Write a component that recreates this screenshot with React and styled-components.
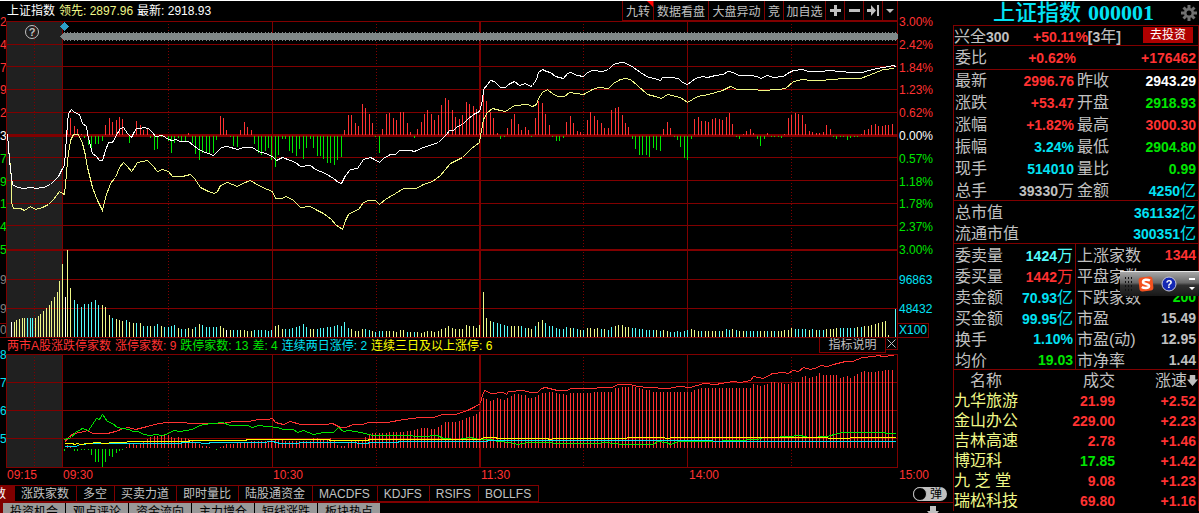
import React from "react";
import styled, { createGlobalStyle } from "styled-components";

const c = {
  line: "#800000",
  red: "#ff3232",
  green: "#00e600",
  cyan: "#02e2f4",
  aqua: "#54fcfc",
  gray: "#c0c0c0",
  dim: "#808080",
  yellow: "#ffff00",
  pale: "#f0f888",
  white: "#ffffff",
};

const Global = createGlobalStyle`
  *, *::before, *::after { box-sizing: border-box; }
  html, body { margin: 0; background: #000; overflow: hidden; }
  body, button, input, table {
    font-family: "Liberation Sans", "Noto Sans CJK SC", sans-serif;
    font-size: 12px;
  }
  button { margin: 0; padding: 0; border: 0; background: none; color: inherit; cursor: pointer; }
`;

/* ---------- page frame ---------- */

const Page = styled.div`
  display: grid;
  grid-template-columns: minmax(0, 1fr) 246px;
  border-top: 1px solid #fff;
  background: #000;
  color: ${c.gray};
  white-space: nowrap;
`;

const Main = styled.main`
  display: flex;
  flex-direction: column;
  min-width: 0;
`;

const Charts = styled.div`
  display: grid;
  grid-template-columns: 6px minmax(0, 1fr) 55px;
`;

const Center = styled.div`
  display: flex;
  flex-direction: column;
  min-width: 0;
`;

const Plot = styled.svg`
  display: block;
  width: 100%;
  height: ${(p) => p.$h}px;
`;

/* ---------- axis columns ---------- */

const Axis = styled.div`
  display: flex;
  flex-direction: column;
  align-items: flex-start;
  padding-top: 13px;
  overflow: hidden;
`;

const Scale = styled.div`
  display: flex;
  flex-direction: column;
  justify-content: space-between;
  height: ${(p) => p.$h}px;
  margin-bottom: ${(p) => p.$after}px;
  padding-left: ${(p) => p.$pad || 0}px;
`;

const Tick = styled.span`
  color: ${(p) => p.$color};
  line-height: 16px;
`;

const Unit = styled.span`
  border: 1px solid ${c.line};
  border-left: 0;
  padding: 0 1px;
  line-height: 13px;
  margin-bottom: 9px;
  color: ${(p) => p.$color};
`;

const ClippedUnit = styled(Unit)`
  padding: 0;
`;

/* ---------- headers ---------- */

const Header = styled.header`
  display: flex;
  justify-content: space-between;
  height: 20px;
`;

const Legend = styled.div`
  display: flex;
  gap: 4px;
  padding-left: 1px;
  line-height: ${(p) => p.$lh}px;
`;

const Ink = styled.span`
  color: ${(p) => p.$color};
`;

const Toolbar = styled.div`
  display: flex;
  border-left: 1px solid ${c.line};
`;

const Tool = styled.button`
  display: flex;
  align-items: center;
  justify-content: center;
  position: relative;
  width: ${(p) => p.$w}px;
  border-right: 1px solid ${c.line};
  border-bottom: 1px solid ${c.line};
`;

const Corner = styled.i`
  position: absolute;
  top: 0;
  right: 0;
  border-top: 6px solid #f00;
  border-left: 6px solid transparent;
`;

const IndicatorBar = styled.div`
  display: flex;
  justify-content: space-between;
  height: 16px;
`;

const Note = styled.button`
  height: 15px;
  line-height: 15px;
  width: 67px;
  border: solid ${c.line};
  border-width: 0 1px 1px;
`;

const Close = styled.button`
  display: flex;
  align-items: center;
  justify-content: center;
  width: 12px;
  height: 12px;
  border: solid ${c.line};
  border-width: 0 1px 1px 0;
`;

const NoteGroup = styled.div`
  display: flex;
`;

/* ---------- time axis and tab strips ---------- */

const Times = styled.div`
  display: grid;
  grid-template-columns: 6px 56fr 210fr 208fr 208fr 210fr 55px;
  line-height: 15px;
  height: 17px;
  color: ${c.red};
`;

const Time = styled.span`
  padding-left: 1px;
`;

const Strip = styled.nav`
  display: flex;
  height: 18px;
  border-bottom: 1px solid ${c.line};
`;

const Tab = styled.button`
  height: 17px;
  line-height: 17px;
  padding: 0 7px 0 6px;
  border: solid ${c.line};
  border-width: 1px 1px 1px 0;
`;

const ActiveTab = styled(Tab)`
  display: flex;
  justify-content: flex-end;
  width: 15px;
  padding: 0 8px 0 0;
  overflow: hidden;
  background: ${c.line};
  color: #fff;
`;

const Switch = styled.label`
  display: flex;
  align-items: center;
  gap: 3px;
  height: 14px;
  margin: 2px 6px 0 auto;
  padding-right: 5px;
  border-radius: 7px;
  background: ${c.gray};
  color: #000;
  line-height: 14px;
`;

const SwitchInput = styled.input`
  appearance: none;
  width: 14px;
  height: 14px;
  margin: 0;
  border: 1px solid ${c.gray};
  border-radius: 50%;
  background: #000;
`;

const NewsStrip = styled.nav`
  display: flex;
  gap: 1px;
  border-left: 3px solid ${c.line};
`;

const NewsTab = styled.button`
  width: 62px;
  height: 18px;
  line-height: 18px;
  background: #999;
  color: #000;
`;

const NewsArrow = styled.button`
  margin: 3px 14px 0 auto;
`;

/* ---------- quote panel ---------- */

const Panel = styled.aside`
  font-size: 16px;
`;

const PanelTitle = styled.h1`
  display: flex;
  align-items: center;
  margin: 0;
  height: 24px;
  padding: 0 2px 0 40px;
  gap: 7px;
  color: ${c.cyan};
  font: bold 22px/24px "Liberation Serif", "Noto Sans CJK SC", serif;
`;

const TitleName = styled.span`
  font-weight: 500;
`;

const Settings = styled.button`
  margin-left: auto;
  line-height: 0;
`;

const PanelBody = styled.div`
  border: solid ${c.line};
  border-width: 0 1px;
`;

const Section = styled.section`
  box-shadow: inset 0 1px ${c.line};
  padding-top: ${(p) => p.$pad || 0}px;
  margin-top: ${(p) => (p.$tuck ? -1 : 0)}px;
`;

const Pairs = styled(Section)`
  display: grid;
  grid-template-columns: ${(p) => (p.$single ? "1fr" : "1fr 1fr")};
`;

const Pair = styled.div`
  display: flex;
  justify-content: space-between;
  height: ${(p) => p.$h}px;
  line-height: ${(p) => p.$h + 2}px;
  padding: 0 2px 0 1px;
  border-right: ${(p) => (p.$rule ? `1px solid ${c.line}` : "0")};
`;

const Num = styled.span`
  font-size: 14px;
  font-weight: bold;
  color: ${(p) => p.$color};
`;

const Suffix = styled.span`
  font-size: 16px;
  font-weight: normal;
`;

const Fund = styled(Section)`
  display: flex;
  align-items: center;
  height: 20px;
`;

const FundRate = styled.span`
  margin-left: auto;
  margin-right: 22px;
`;

const Invest = styled.button`
  width: 50px;
  height: 16px;
  margin-right: 5px;
  background: #b00000;
  color: #fff;
  line-height: 16px;
`;

const Ratio = styled(Section)`
  display: grid;
  grid-template-columns: 60px 61px 1fr;
  padding: 1px 2px 0 1px;
  height: 24px;
  line-height: 24px;
  text-align: right;
  & > :first-child { text-align: left; }
`;

const Rank = styled.table`
  width: 100%;
  table-layout: fixed;
  border-collapse: collapse;
  font-size: 16px;
  th, td { padding: 0; height: 20px; line-height: 20px; font-weight: normal; text-align: right; }
  th { height: 21px; }
  th:first-child { text-align: left; padding-left: 16px; }
  td:first-child { text-align: left; color: ${c.pale}; }
  td:last-child { padding-right: 2px; }
  th:nth-child(1) { width: 90px; }
  th:nth-child(2) { width: 71px; }
`;

/* ---------- floating input-method bar ---------- */

const ImeBar = styled.div`
  position: fixed;
  top: 271px;
  right: 0;
  display: flex;
  align-items: center;
  width: 79px;
  height: 25px;
  padding: 0 4px;
  border-top: 1px solid #e8e8e8;
  border-radius: 0 0 0 4px;
  background: linear-gradient(#a8a8a8, #686868 45%, #303030 55%, #181818);
`;

const Grip = styled.span`
  width: 9px;
  height: 16px;
  margin-right: 6px;
  background: radial-gradient(circle, #111 1px, transparent 1px) 0 0 / 3px 4px;
`;

const ImeIcon = styled.button`
  line-height: 0;
  margin-right: ${(p) => p.$after}px;
`;

/* ---------- series data ---------- */

const OPEN_X = 67;
const STEP = 3.466;
const barX = (i) => Math.round(OPEN_X + i * STEP);

const indexLine =
  "7,134 9,160 12,184 15,186 22,188 32,187 35,188 43,187 50,184 53,181 58,176 62,168 64,165 67,123 68,113 71,109 74,112 79,114 82,123 86,126 88,138 92,153 96,156 99,160 102,160 105,150 108,142 112,142 117,133 120,128 123,127 127,133 131,137 133,133 136,128 140,128 143,127 148,128 152,132 155,136 162,135 168,139 172,140 175,139 180,141 188,141 193,145 197,148 202,151 208,153 213,155 218,150 221,147 227,146 237,149 243,147 252,147 258,151 265,153 272,156 276,160 282,157 290,160 295,162 300,166 310,165 315,169 325,173 333,178 338,182 341,183 345,175 350,169 357,168 363,159 370,157 374,159 379,162 383,158 390,154 395,154 399,150 410,150 414,151 423,147 438,142 443,137 446,134 449,130 453,130 457,126 462,124 467,119 473,114 479,111 482,100 483,89 487,84 490,80 494,81 500,87 505,87 508,84 514,81 519,85 525,83 530,86 532,85 536,79 538,72 542,69 546,71 550,72 555,76 563,78 567,73 570,72 577,75 583,76 587,72 592,70 602,71 608,69 612,65 615,63 623,62 628,64 633,67 640,72 648,77 654,78 660,80 662,77 670,77 678,78 682,82 687,84 695,78 702,76 707,77 715,75 723,74 727,71 733,72 738,75 750,75 757,76 760,78 767,75 773,77 783,76 787,73 793,70 802,69 808,71 820,71 830,70 838,71 853,72 862,72 868,70 877,68 888,66 894,65 895,67";

const leadLine =
  "7,134 8,147 10,167 11,180 11,202 13,208 20,208 24,210 30,206 35,209 42,207 48,204 53,199 59,191 62,193 64,194 66,173 67,160 68,153 70,140 73,134 78,134 82,143 85,155 87,167 92,187 97,200 102,210 105,197 110,183 115,177 119,167 123,162 127,166 131,171 134,167 137,162 147,160 152,165 157,171 162,169 168,171 172,176 182,176 190,174 194,178 200,187 208,191 214,193 217,191 220,185 227,182 237,186 242,183 250,180 258,185 267,189 272,191 275,198 282,198 285,196 292,199 296,203 300,207 310,206 315,209 323,213 331,219 335,224 342,229 345,220 348,214 353,211 358,209 363,202 368,200 375,200 379,204 385,199 395,193 403,188 416,188 423,184 432,181 440,175 445,169 450,163 462,157 471,148 479,142 481,130 483,119 487,112 492,108 500,110 505,111 514,105 527,104 532,106 536,104 538,98 542,92 547,89 553,94 558,96 564,96 569,92 583,94 592,89 598,87 608,88 613,83 620,79 625,78 630,79 637,85 647,94 655,96 661,98 667,94 680,97 687,102 697,96 708,94 722,90 730,86 737,89 753,89 762,90 778,89 785,88 793,81 802,79 810,80 820,80 843,78 860,78 868,75 883,69 894,68";

const strength = [
  12, 17, 9, 6, 1, -2, -9, -15, -8, -8, -5, 10, 17, 13, 15, 18, 16, 0, -7, 0, 14, 10, 5, 6, -2, -14, -13, -1, 0, -5,
  -17, -7, -2, -5, -5, 2, -7, -18, -24, -17, -17, -17, -17, -4, 19, 17, 5, -1, -10, -11, 5, 13, 8, 5, -8, -17, -19,
  -15, -12, -24, -31, -19, -3, -3, -15, -17, -20, -13, -23, -12, -3, -12, -20, -20, -23, -27, -27, -29, -24, -21, 5,
  20, 20, 12, 9, 31, 27, 21, 12, -1, -17, 6, 21, 22, 17, 15, 23, 23, 12, 3, -2, 6, 13, 21, 25, 21, 15, 20, 30, 37, 35,
  25, 18, 16, 20, 33, 31, 29, 26, 20, 45, 34, 23, 17, 2, -3, -1, 7, 16, 21, 11, 5, 8, 5, -1, 17, 34, 32, 21, 10, -1,
  -5, -5, -2, 13, 19, 12, 4, 3, 1, 15, 23, 19, 15, 12, 7, 7, 25, 27, 28, 20, 12, 8, -3, -13, -19, -19, -19, -21, -12,
  -14, -15, 6, 13, 7, -1, -4, -11, -22, -24, -3, 16, 18, 14, 14, 13, 16, 17, 16, 15, 18, 22, 11, -1, -3, 1, 4, 6, 2,
  -3, -10, -3, 2, -1, -1, -1, -2, 1, 17, 20, 22, 21, 20, 11, 4, 3, 2, 2, 3, 10, 6, -1, -3, -1, -1, -4, -2, -1, -1, 1,
  5, 6, 10, 11, 9, 9, 10, 10, 11,
];

const auction = [15, 15, 17, 18, 19, 19, 19, 19, 19, 19, 21, 23, 26, 29, 32, 36, 40, 45, 56, 73, 40];
const auctionInk = "wyyyyycccyyyyyyyyyyyw";

const volume = [
  87, 49, 37, 33, 30, 33, 33, 35, 37, 32, 32, 30, 22, 19, 18, 17, 16, 17, 15, 14, 14, 14, 11, 11, 11, 11, 13, 11, 10,
  10, 11, 12, 9, 8, 8, 9, 8, 10, 13, 12, 10, 10, 10, 10, 11, 9, 7, 7, 7, 7, 7, 7, 6, 6, 7, 7, 7, 7, 6, 7, 11, 12, 8,
  8, 8, 9, 10, 11, 13, 10, 8, 8, 8, 9, 9, 10, 10, 11, 12, 11, 15, 9, 8, 6, 6, 8, 8, 7, 6, 5, 6, 6, 6, 6, 6, 5, 7, 7,
  5, 5, 5, 5, 4, 5, 6, 6, 5, 6, 8, 9, 11, 9, 8, 8, 8, 12, 11, 11, 9, 12, 45, 19, 16, 15, 14, 13, 12, 11, 11, 11, 11,
  11, 9, 9, 8, 11, 15, 17, 14, 11, 11, 9, 8, 8, 10, 9, 9, 8, 7, 7, 9, 9, 8, 9, 8, 8, 7, 10, 11, 12, 12, 10, 10, 9, 9,
  8, 8, 7, 7, 7, 7, 6, 7, 6, 5, 5, 6, 5, 6, 7, 8, 7, 6, 6, 6, 6, 6, 6, 6, 6, 8, 7, 8, 7, 6, 6, 6, 6, 6, 6, 6, 6, 6,
  6, 6, 6, 6, 7, 7, 9, 8, 8, 8, 8, 7, 8, 7, 7, 7, 8, 8, 8, 9, 9, 9, 9, 9, 9, 10, 10, 11, 11, 12, 13, 14, 15, 16, 2, 0, 28,
];
const volumeInk =
  "yyccccccccyyycyyycyycyccyccyccccyccyycycccccyywyccyyyyccccccyyycccccccyyccccccccccyyyyccycccyyyyyycycyyyyyyyyyyyyyyyyyyy" +
  "yyycccccyyyccyycyycccccccyccycyyyycyccyyyyycccccccycyyccccccyyycyyyycyccycyyccccyycycyyyyyccccycyccyyyycccccycyyyyyyyyyc";

const limitUpLine =
  "64,442 68,437 73,433 80,432 87,430 92,433 107,433 115,431 123,428 128,427 135,429 147,426 158,423 167,422 182,422 190,423 222,423 233,421 248,421 258,419 267,419 272,418 275,422 283,424 290,421 300,424 325,424 332,423 340,427 345,427 353,424 362,424 368,422 387,422 403,419 420,417 433,417 442,414 455,414 467,410 475,406 480,403 482,395 484,390 491,393 503,392 506,394 508,391 523,390 530,392 537,392 541,388 545,387 557,390 567,390 570,388 595,388 598,387 612,387 617,384 630,384 637,386 647,387 668,388 678,386 690,387 703,383 715,384 733,381 740,382 750,380 753,376 763,378 772,373 783,372 788,373 792,370 798,371 803,367 810,369 817,367 820,365 827,366 833,364 845,361 852,361 862,357 873,356 878,355 882,356 894,355";
const limitDownLine =
  "64,439 71,437 75,432 82,428 88,430 92,424 96,418 99,419 102,414 107,421 112,423 117,427 128,429 133,431 138,431 143,434 150,435 155,434 162,435 168,433 173,430 180,431 192,429 197,426 203,424 222,422 230,425 247,425 252,427 258,425 277,427 283,429 293,429 297,432 303,430 313,434 323,432 333,432 338,427 343,431 348,430 360,432 373,435 403,435 422,436 437,435 443,438 457,439 470,437 478,439 490,439 498,441 510,442 517,444 527,442 547,442 557,443 597,443 605,442 623,444 653,444 657,441 666,442 670,444 678,441 710,441 757,439 763,437 773,437 787,436 800,435 808,437 827,436 837,433 842,432 883,432 887,433 895,433";
const threeDayLine =
  "64,443 72,443 74,444 77,443 80,444 88,443 98,442 103,443 115,442 125,442 128,441 188,441 190,440 245,440 247,439 328,439 330,440 367,440 369,439 480,439 483,437 495,437 497,438 547,438 549,439 555,438 625,438 628,437 661,437 668,438 671,437 826,437 829,438 848,438 851,437 895,437";
const twoDayLine =
  "64,446 75,446 80,444 92,443 180,443 182,442 192,442 208,443 210,442 262,442 272,441 280,443 297,443 300,442 345,442 367,443 369,442 397,442 399,441 485,441 489,440 710,440 715,441 895,441";

// Limit-up minus limit-down count, as [x, height] turning points.
const spreadPoints = [
  [64, -2], [67, 3], [71, 2], [74, -2], [88, -1], [91, -6], [95, -13], [98, -13], [102, -18], [105, -13], [109, -7],
  [112, -8], [116, -4], [120, -1], [124, -1], [127, 2], [130, 5], [134, 3], [137, 3], [143, 7], [150, 11], [158, 12],
  [168, 13], [172, 10], [178, 11], [188, 9], [196, 6], [202, 2], [207, 2], [211, 0], [217, -1], [221, 1], [227, 4],
  [240, 5], [251, 7], [266, 7], [275, 8], [290, 7], [310, 7], [314, 11], [318, 10], [323, 8], [331, 10], [335, 6],
  [338, 2], [345, 2], [349, 7], [362, 8], [366, 12], [373, 15], [403, 16], [411, 17], [416, 19], [421, 20], [433, 19],
  [438, 21], [445, 26], [458, 26], [466, 30], [472, 31], [476, 34], [480, 36], [483, 50], [490, 47], [497, 50],
  [504, 48], [508, 51], [515, 54], [525, 53], [528, 50], [535, 51], [542, 55], [551, 56], [566, 53], [570, 55],
  [611, 56], [615, 60], [625, 61], [632, 62], [636, 60], [649, 58], [653, 56], [691, 56], [695, 58], [702, 60],
  [750, 60], [753, 64], [761, 62], [765, 63], [771, 66], [785, 64], [798, 66], [802, 71], [805, 72], [810, 70],
  [816, 72], [819, 75], [824, 73], [836, 73], [840, 70], [848, 72], [850, 70], [858, 74], [864, 77], [874, 75],
  [878, 77], [892, 78], [895, 81],
];

function spreadAt(x) {
  for (let i = 1; i < spreadPoints.length; i++) {
    const [x0, h0] = spreadPoints[i - 1];
    const [x1, h1] = spreadPoints[i];
    if (x <= x1) return Math.round(h0 + ((h1 - h0) * (x - x0)) / (x1 - x0));
  }
  return spreadPoints[spreadPoints.length - 1][1];
}

const upBar = (x, base, h) => `M${x + 0.5} ${base}v${-h}`;

const strengthUp = strength.map((h, i) => (h > 0 ? upBar(barX(i), 135, h) : "")).join("");
const strengthDown = strength.map((h, i) => (h < 0 ? upBar(barX(i), 136, h) : "")).join("");

const volumePath = (ink) =>
  auction.map((h, i) => (auctionInk[i] === ink ? upBar(Math.round(11 + i * 2.68), 337, h) : "")).join("") +
  volume.map((h, i) => ((volumeInk[i] || "y") === ink && h ? upBar(barX(i), 337, h) : "")).join("");

const spreadXs = Array.from({ length: 240 }, (_, i) => barX(i - 1));
const spreadUp = spreadXs.map((x) => (spreadAt(x) > 0 ? upBar(x, 448, spreadAt(x)) : "")).join("");
const spreadDown = spreadXs.map((x) => (spreadAt(x) < 0 ? upBar(x, 449, spreadAt(x)) : "")).join("");

const diamonds = Array.from({ length: 241 }, (_, i) => `M${barX(i - 1) - 4} 36.5l4.500 -4.500l4.500 4.500l-4.500 4.500z`).join("");

/* ---------- charts ---------- */

function Grid({ top, bottom, rows }) {
  return (
    <g stroke={c.line} fill="none">
      <rect x="7" y={top} width="55" height={bottom - top} fill="#202020" stroke="none" />
      {rows.map((y) => (
        <path key={y} d={`M6 ${y + 0.5}H898`} />
      ))}
      {[6, 62, 272, 687, 897].map((x) => (
        <path key={x} d={`M${x + 0.5} ${top}V${bottom}`} />
      ))}
      <path d={`M480 ${top}V${bottom}`} strokeWidth="2" />
      {[34, 168, 376, 583, 791].map((x) => (
        <path key={x} d={`M${x + 0.5} ${top + 3}V${bottom}`} strokeDasharray="1 2" />
      ))}
    </g>
  );
}

function Line({ points, color }) {
  return <polyline points={points} transform="translate(0.5 0.5)" fill="none" stroke={color} />;
}

function PriceChart() {
  return (
    <Plot $h={317} viewBox="6 21 892 317" preserveAspectRatio="none" shapeRendering="crispEdges" role="img" aria-label="分时走势">
      <Grid top={21} bottom={338} rows={[21, 44, 66, 89, 112, 157, 180, 203, 225, 279, 308, 337]} />
      <path d="M6 135.500H898" stroke={c.line} strokeWidth="3" />
      <path d="M6 250H898" stroke={c.line} strokeWidth="2" />
      <path d={diamonds} fill="#808888" />
      <rect x="63" y="33" width="832" height="7" fill="#808888" />
      <path d="M64.500 22l4.500 4.500l-4.500 4.500l-4.500 -4.500z" fill="#2d9ec8" />
      <path d={strengthUp} stroke={c.red} />
      <path d={strengthDown} stroke={c.green} />
      <path d={volumePath("y")} stroke={c.pale} />
      <path d={volumePath("c")} stroke={c.aqua} />
      <path d={volumePath("w")} stroke="#fff" />
      <Line points={leadLine} color={c.pale} />
      <Line points={indexLine} color="#fff" />
      <circle cx="32" cy="32" r="6.500" fill="none" stroke={c.gray} shapeRendering="auto" />
      <text x="32" y="36" textAnchor="middle" fontSize="11" fontWeight="bold" fill={c.gray}>?</text>
    </Plot>
  );
}

function LimitChart() {
  return (
    <Plot $h={114} viewBox="6 354 892 114" preserveAspectRatio="none" shapeRendering="crispEdges" role="img" aria-label="涨跌停家数">
      <Grid top={354} bottom={468} rows={[354, 382, 410, 438, 467]} />
      <path d={spreadUp} stroke={c.red} />
      <path d={spreadDown} stroke={c.green} />
      <Line points={limitUpLine} color={c.red} />
      <Line points={limitDownLine} color={c.green} />
      <Line points={twoDayLine} color={c.cyan} />
      <Line points={threeDayLine} color={c.yellow} />
    </Plot>
  );
}

/* ---------- content ---------- */

const side = [c.red, c.red, c.red, c.red, c.red, c.white, c.green, c.green, c.green, c.green, c.green];
const percents = ["3.00%", "2.42%", "1.84%", "1.23%", "0.62%", "0.00%", "0.57%", "1.18%", "1.78%", "2.37%", "3.00%"];
const prices = ["2", "4", "7", "9", "2", "3", "7", "9", "1", "4", "5"];

const quotes = [
  ["最新", "2996.76", c.red], ["昨收", "2943.29", c.white],
  ["涨跌", "+53.47", c.red], ["开盘", "2918.93", c.green],
  ["涨幅", "+1.82%", c.red], ["最高", "3000.30", c.red],
  ["振幅", "3.24%", c.cyan], ["最低", "2904.80", c.green],
  ["现手", "514010", c.cyan], ["量比", "0.99", c.green],
  ["总手", "39330", c.gray, "万"], ["金额", "4250", c.cyan, "亿"],
];
const caps = [
  ["总市值", "361132", c.cyan, "亿"],
  ["流通市值", "300351", c.cyan, "亿"],
];
const breadth = [
  ["委卖量", "1424", c.aqua, "万"], ["上涨家数", "1344", c.red],
  ["委买量", "1442", c.red, "万"], ["平盘家数", "", c.white],
  ["卖金额", "70.93", c.cyan, "亿"], ["下跌家数", "200", c.green],
  ["买金额", "99.95", c.cyan, "亿"], ["市盈", "15.49", c.gray],
  ["换手", "1.10%", c.cyan], ["市盈(动)", "12.95", c.gray],
  ["均价", "19.03", c.green], ["市净率", "1.44", c.gray],
];
const ranks = [
  ["九华旅游", "21.99", "+2.52"],
  ["金山办公", "229.00", "+2.23"],
  ["吉林高速", "2.78", "+1.46"],
  ["博迈科", "17.85", "+1.42", c.green],
  ["九 芝 堂", "9.08", "+1.23"],
  ["瑞松科技", "69.80", "+1.16"],
];

function PairList({ items, h, rule, ...rest }) {
  return (
    <Pairs {...rest}>
      {items.map(([label, value, color, suffix], i) => (
        <Pair key={label} $h={h} $rule={rule && i % 2 === 0}>
          <span>{label}</span>
          <Num $color={color}>
            {value}
            {suffix && <Suffix>{suffix}</Suffix>}
          </Num>
        </Pair>
      ))}
    </Pairs>
  );
}

function DownArrow({ size }) {
  return (
    <svg width={size} height={size} viewBox="0 0 12 12" aria-hidden="true">
      <path d="M3 0h6v5h3L6 12 0 5h3z" fill={c.gray} />
    </svg>
  );
}

export default function App() {
  return (
    <Page>
      <Global />
      <Main>
        <Charts>
          <Axis>
            <Scale $h={244} $after={14}>
              {prices.map((t, i) => <Tick key={i} $color={side[i]}>{t}</Tick>)}
            </Scale>
            <Scale $h={45} $after={6}>
              <Tick $color={c.dim}>9</Tick>
              <Tick $color={c.dim}>9</Tick>
            </Scale>
            <ClippedUnit $color={c.dim}>0</ClippedUnit>
            <Scale $h={100} $after={0}>
              {["8", "7", "6", "5"].map((t) => <Tick key={t} $color={c.cyan}>{t}</Tick>)}
            </Scale>
          </Axis>

          <Center>
            <Header>
              <Legend $lh={21}>
                <Ink $color={c.white}>上证指数</Ink>
                <Ink $color={c.pale}>领先: 2897.96</Ink>
                <Ink $color={c.white}>最新: 2918.93</Ink>
              </Legend>
              <Toolbar>
                <Tool $w={31}>九转<Corner /></Tool>
                <Tool $w={55}>数据看盘</Tool>
                <Tool $w={56}>大盘异动</Tool>
                <Tool $w={19}>竞</Tool>
                <Tool $w={42}>加自选</Tool>
                <Tool $w={19} aria-label="放大">
                  <svg width="11" height="11"><path d="M4 0h3v4h4v3H7v4H4V7H0V4h4z" fill={c.gray} /></svg>
                </Tool>
                <Tool $w={19} aria-label="缩小">
                  <svg width="11" height="11"><path d="M0 4h11v3H0z" fill={c.gray} /></svg>
                </Tool>
                <Tool $w={19} aria-label="最后">
                  <svg width="12" height="11"><path d="M0 4h4V0l5 5.500L4 11V7H0zM10 0h2v11h-2z" fill={c.gray} /></svg>
                </Tool>
                <Tool $w={15} aria-label="更多">
                  <svg width="8" height="4"><path d="M0 0h8L4 4z" fill={c.gray} /></svg>
                </Tool>
              </Toolbar>
            </Header>
            <PriceChart />
            <IndicatorBar>
              <Legend $lh={17}>
                <Ink $color={c.red}>两市A股涨跌停家数</Ink>
                <Ink $color={c.red}>涨停家数: 9</Ink>
                <Ink $color={c.green}>跌停家数: 13</Ink>
                <Ink $color={c.green}>差: 4</Ink>
                <Ink $color={c.cyan}>连续两日涨停: 2</Ink>
                <Ink $color={c.yellow}>连续三日及以上涨停: 6</Ink>
              </Legend>
              <NoteGroup>
                <Note>指标说明</Note>
                <Close aria-label="关闭">
                  <svg width="9" height="9"><path d="M.5.5l8 8M8.500.5l-8 8" stroke={c.gray} /></svg>
                </Close>
              </NoteGroup>
            </IndicatorBar>
            <LimitChart />
          </Center>

          <Axis>
            <Scale $h={244} $after={14} $pad={1}>
              {percents.map((t, i) => <Tick key={i} $color={side[i]}>{t}</Tick>)}
            </Scale>
            <Scale $h={45} $after={6} $pad={1}>
              <Tick $color={c.cyan}>96863</Tick>
              <Tick $color={c.cyan}>48432</Tick>
            </Scale>
            <Unit $color={c.cyan}>X100</Unit>
          </Axis>
        </Charts>

        <Times>
          <span />
          {["09:15", "09:30", "10:30", "11:30", "14:00", "15:00"].map((t) => <Time key={t}>{t}</Time>)}
        </Times>

        <Strip>
          <ActiveTab>数</ActiveTab>
          {["涨跌家数", "多空", "买卖力道", "即时量比", "陆股通资金", "MACDFS", "KDJFS", "RSIFS", "BOLLFS"].map((t) => (
            <Tab key={t}>{t}</Tab>
          ))}
          <Switch>
            <SwitchInput type="checkbox" />
            弹
          </Switch>
        </Strip>
        <NewsStrip>
          {["投资机会", "观点评论", "资金流向", "主力增仓", "短线涨跌", "板块热点"].map((t) => (
            <NewsTab key={t}>{t}</NewsTab>
          ))}
          <NewsArrow aria-label="展开"><DownArrow size={12} /></NewsArrow>
        </NewsStrip>
      </Main>

      <Panel>
        <PanelTitle>
          <TitleName>上证指数</TitleName>
          <span>000001</span>
          <Settings aria-label="设置">
            <svg width="16" height="16" viewBox="0 0 16 16">
              <g stroke="#707070" strokeWidth="3">
                <path d="M8 0v16M0 8h16M2.500 2.500l11 11M13.500 2.500l-11 11" />
              </g>
              <circle cx="8" cy="8" r="5" fill="#707070" />
              <circle cx="8" cy="8" r="2.500" fill="#000" />
            </svg>
          </Settings>
        </PanelTitle>
        <PanelBody>
          <Fund>
            <span>兴全<Num $color={c.gray}>300</Num></span>
            <FundRate><Num $color={c.red}>+50.11%</Num><Num $color={c.gray}>[3<Suffix>年</Suffix>]</Num></FundRate>
            <Invest>去投资</Invest>
          </Fund>
          <Ratio>
            <span>委比</span>
            <Num $color={c.red}>+0.62%</Num>
            <Num $color={c.red}>+176462</Num>
          </Ratio>
          <PairList items={quotes} h={22} />
          <PairList items={caps} h={21} $single $pad={1} $tuck />
          <PairList items={breadth} h={21} rule $pad={1} />
          <Section $pad={1} $tuck>
            <Rank>
              <thead>
                <tr><th>名称</th><th>成交</th><th>涨速<DownArrow size={11} /></th></tr>
              </thead>
              <tbody>
                {ranks.map(([name, price, speed, color]) => (
                  <tr key={name}>
                    <td>{name}</td>
                    <td><Num $color={color || c.red}>{price}</Num></td>
                    <td><Num $color={c.red}>{speed}</Num></td>
                  </tr>
                ))}
              </tbody>
            </Rank>
          </Section>
        </PanelBody>
      </Panel>

      <ImeBar>
        <Grip />
        <ImeIcon $after={7} aria-label="输入法">
          <svg width="16" height="16" viewBox="0 0 16 16">
            <rect x="1" y="1" width="14" height="14" rx="3" fill="#f4511e" transform="rotate(-6 8 8)" />
            <path d="M12 4.500C9 3 5 3.500 5 6s6.500 1.500 6 4.200C10.500 12.500 6 12.500 3.800 11" fill="none" stroke="#fff" strokeWidth="2.500" />
          </svg>
        </ImeIcon>
        <ImeIcon $after={12} aria-label="帮助">
          <svg width="16" height="16" viewBox="0 0 16 16">
            <circle cx="8" cy="8" r="7" fill="#1428b4" stroke="#c8c8d8" />
            <text x="8" y="12" textAnchor="middle" fontSize="11" fontWeight="bold" fill="#fff">?</text>
          </svg>
        </ImeIcon>
        <ImeIcon $after={0} aria-label="菜单">
          <svg width="6" height="14" viewBox="0 0 6 14">
            <path d="M0 1h6v2H0zM0 10h6l-3 3z" fill="#fff" />
          </svg>
        </ImeIcon>
      </ImeBar>
    </Page>
  );
}
